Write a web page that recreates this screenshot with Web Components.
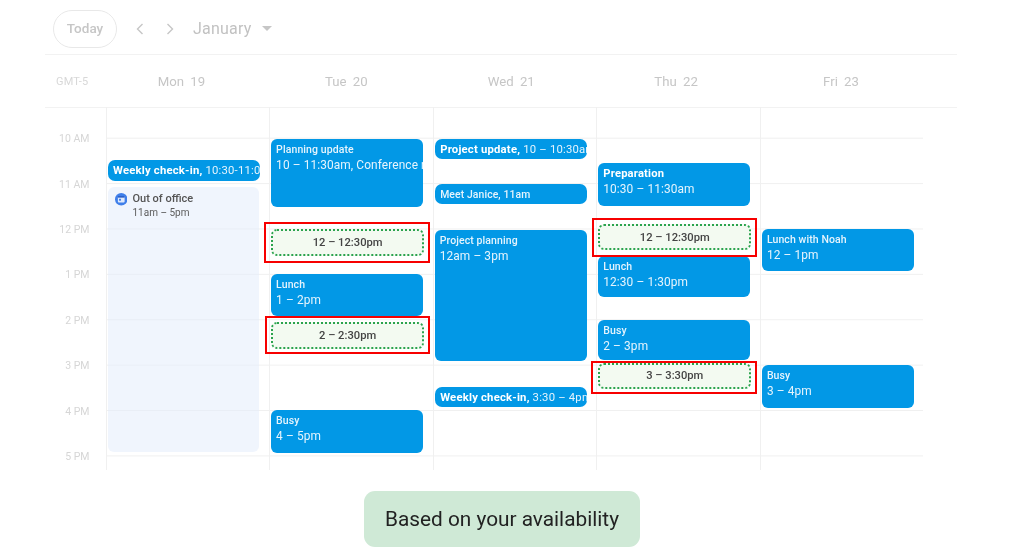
<!DOCTYPE html>
<html>
<head>
<meta charset="utf-8">
<title>Calendar</title>
<style>
  html, body { margin: 0; padding: 0; background: #fff; }
  body { font-family: Roboto, "Liberation Sans", sans-serif; width: 1010px; height: 558px; overflow: hidden; }
</style>
</head>
<body>
<cal-app>
  <cal-toolbar month="January"></cal-toolbar>
  <cal-weekdays></cal-weekdays>
  <cal-grid>
    <cal-day>
      <cal-event top="53" h="21" compact><b>Weekly check-in,</b> 10:30-11:00am</cal-event>
      <cal-away top="80" h="265"></cal-away>
    </cal-day>
    <cal-day>
      <cal-event top="32" h="68" title-text="Planning update">10 – 11:30am, Conference room</cal-event>
      <cal-suggest top="122" h="27" ring="-7 -6 -7 -7">12 – 12:30pm</cal-suggest>
      <cal-event top="167" h="42" title-text="Lunch">1 – 2pm</cal-event>
      <cal-suggest top="215" h="27" ring="-6 -6 -4.5 -6">2 – 2:30pm</cal-suggest>
      <cal-event top="303" h="43" title-text="Busy">4 – 5pm</cal-event>
    </cal-day>
    <cal-day>
      <cal-event top="32" h="20" compact><b>Project update,</b> 10 – 10:30am</cal-event>
      <cal-event top="77" h="20" compact small>Meet Janice, 11am</cal-event>
      <cal-event top="123" h="131" title-text="Project planning">12am – 3pm</cal-event>
      <cal-event top="280" h="20" compact><b>Weekly check-in,</b> 3:30 – 4pm</cal-event>
    </cal-day>
    <cal-day>
      <cal-event top="56" h="43" title-text="Preparation" strong>10:30 – 11:30am</cal-event>
      <cal-event top="149" h="41" title-text="Lunch">12:30 – 1:30pm</cal-event>
      <cal-suggest top="117" h="26" ring="-6 -6 -7 -6">12 – 12:30pm</cal-suggest>
      <cal-event top="213" h="40" title-text="Busy">2 – 3pm</cal-event>
      <cal-suggest top="256" h="25.5" ring="-2.5 -6 -5.5 -7">3 – 3:30pm</cal-suggest>
    </cal-day>
    <cal-day>
      <cal-event top="122" h="42" title-text="Lunch with Noah">12 – 1pm</cal-event>
      <cal-event top="258" h="43" title-text="Busy">3 – 4pm</cal-event>
    </cal-day>
  </cal-grid>
  <cal-caption>Based on your availability</cal-caption>
</cal-app>

<script>
// page frame: stacks toolbar, weekday row, grid and caption
class CalApp extends HTMLElement {
  constructor() {
    super();
    this.attachShadow({mode: 'open'}).innerHTML = `<style>
      :host { display: flex; flex-direction: column; width: 1010px; height: 558px; filter: blur(.45px); }
    </style><slot></slot>`;
  }
}

class CalToolbar extends HTMLElement {
  constructor() {
    super();
    this.attachShadow({mode: 'open'}).innerHTML = `<style>
      :host { display: flex; align-items: center; height: 55px; margin: 0 53px 0 45px; padding: 3px 0 0 8px;
        box-sizing: border-box; border-bottom: 1px solid #f2f2f2; color: #c2c2c2; }
      .today { display: flex; align-items: center; justify-content: center; width: 64px; height: 38px;
        padding-bottom: 1px; box-sizing: border-box;
        border: 1px solid #e8e8e8; border-radius: 19px; font-size: 13.5px; font-weight: 500; color: #c6c6c6; }
      svg { display: block; flex: none; }
      .prev { margin-left: 18px; }
      .next { margin-left: 20px; }
      .month { margin-left: 18px; font-size: 16px; letter-spacing: .2px; }
      .caret { margin-left: 11px; }
    </style>
    <div class="today">Today</div>
    <svg class="prev" width="10" height="14" viewBox="0 0 10 14"><path d="M7.5 2 L2.5 7 L7.5 12" fill="none" stroke="#c6c6c6" stroke-width="1.4"/></svg>
    <svg class="next" width="10" height="14" viewBox="0 0 10 14"><path d="M2.5 2 L7.5 7 L2.5 12" fill="none" stroke="#c6c6c6" stroke-width="1.4"/></svg>
    <div class="month">${this.getAttribute('month')}</div>
    <svg class="caret" width="10" height="5" viewBox="0 0 10 5"><path d="M0 0 H10 L5 5 Z" fill="#c6c6c6"/></svg>`;
  }
}

class CalWeekdays extends HTMLElement {
  constructor() {
    super();
    const days = [['Mon', 19], ['Tue', 20], ['Wed', 21], ['Thu', 22], ['Fri', 23]];
    this.attachShadow({mode: 'open'}).innerHTML = `<style>
      :host { display: flex; align-items: center; height: 53px; margin: 0 53px 0 45px; box-sizing: border-box;
        border-bottom: 1px solid #f2f2f2; color: #c6c6c6; }
      .tz { width: 54px; box-sizing: border-box; padding-left: 11px; font-size: 11px; color: #d8d8d8; letter-spacing: .2px; white-space: nowrap; }
      .day { width: 164.9px; text-align: center; font-size: 13.2px; word-spacing: 3px; }
    </style>
    <div class="tz">GMT-5</div>
    ${days.map(d => `<div class="day">${d[0]} ${d[1]}</div>`).join('')}`;
  }
}

// hour gutter on the left plus the day columns
class CalGrid extends HTMLElement {
  constructor() {
    super();
    const hours = ['10 AM', '11 AM', '12 PM', '1 PM', '2 PM', '3 PM', '4 PM', '5 PM'];
    this.attachShadow({mode: 'open'}).innerHTML = `<style>
      :host { display: flex; height: 363px; margin-top: -1px; }
      .gutter { width: 105.5px; flex: none; box-sizing: border-box; padding: 9px 16px 0 0; }
      .gutter div { height: 45.4px; display: flex; align-items: center; justify-content: flex-end;
        font-size: 10.5px; color: #d6d6d6; }
      .days { display: flex; }
    </style>
    <div class="gutter">${hours.map(h => `<div>${h}</div>`).join('')}</div>
    <div class="days"><slot></slot></div>`;
  }
}

class CalDay extends HTMLElement {
  constructor() {
    super();
    this.attachShadow({mode: 'open'}).innerHTML = `<style>
      :host { display: block; position: relative; width: 163.6px; height: 363px; box-sizing: border-box;
        border-left: 1px solid #f0f0f0;
        background: linear-gradient(to bottom, #f0f0f0 1px, transparent 1px) 0 30.7px / 100% 45.4px repeat-y; }
    </style><slot></slot>`;
  }
}

class CalEvent extends HTMLElement {
  constructor() {
    super();
    const title = this.getAttribute('title-text');
    this.attachShadow({mode: 'open'}).innerHTML = `<style>
      :host { position: absolute; left: 1px; width: 152px; box-sizing: border-box; overflow: hidden;
        background: #0298e6; color: #e6f4fd; border-radius: 6px; padding: 3.5px 0 0 5px;
        font-size: 11.9px; line-height: 15px; white-space: nowrap; letter-spacing: .1px; }
      :host([compact]) { display: flex; align-items: center; padding: 0 0 0 5.5px; border-radius: 7px; font-size: 11.3px; letter-spacing: .2px; }
      :host([small]) { font-size: 10.4px; font-weight: 500; letter-spacing: .1px; }
      .t { font-size: 10.5px; line-height: 13px; margin-bottom: 2px; font-weight: 500; letter-spacing: .1px; }
      :host([strong]) { padding-top: 4px; }
      :host([strong]) .t { font-size: 11.2px; font-weight: 700; color: #fff; letter-spacing: .2px; }
      ::slotted(b) { font-weight: 700; color: #fff; white-space: pre; }
    </style>
    ${title ? `<div class="t">${title}</div>` : ''}<span style="white-space:pre"><slot></slot></span>`;
    this.style.top = this.getAttribute('top') + 'px';
    this.style.height = this.getAttribute('h') + 'px';
  }
}

// out of office block with the little calendar badge
class CalAway extends HTMLElement {
  constructor() {
    super();
    this.attachShadow({mode: 'open'}).innerHTML = `<style>
      :host { position: absolute; left: 1px; width: 151px; box-sizing: border-box; display: flex; gap: 5.5px;
        background: rgba(226, 236, 251, .52); border-radius: 6px; padding: 5px 0 0 7px; color: #5c5c5c; }
      svg { flex: none; margin-top: 1px; }
      .a { font-size: 11px; line-height: 14px; font-weight: 500; color: #555; }
      .b { font-size: 10px; line-height: 14px; }
    </style>
    <svg width="12.5" height="12.5" viewBox="0 0 13 13">
      <circle cx="6.5" cy="6.5" r="6.5" fill="#3f7fea"/>
      <rect x="3" y="3.2" width="7" height="6.6" rx="1" fill="#dfe9fb"/>
      <rect x="3" y="3.2" width="7" height="1.6" fill="#1e56c4"/>
      <rect x="4.2" y="6" width="2" height="2" fill="#3f7fea"/>
    </svg>
    <div><div class="a">Out of office</div><div class="b">11am – 5pm</div></div>`;
    this.style.top = this.getAttribute('top') + 'px';
    this.style.height = this.getAttribute('h') + 'px';
  }
}

// suggested slot: dotted green box with a red highlight ring around it
// ring = top right bottom left, measured from the dotted box's outer edge
class CalSuggest extends HTMLElement {
  constructor() {
    super();
    const [t, r, b, l] = this.getAttribute('ring').split(' ').map(Number);
    this.attachShadow({mode: 'open'}).innerHTML = `<style>
      :host { position: absolute; left: 1px; width: 153px; box-sizing: border-box; z-index: 2;
        display: flex; align-items: center; justify-content: center;
        background: #f3faf1; border: 2px dotted #2ba34e; border-radius: 6px;
        font-size: 11.2px; color: #444; font-weight: 500; }
      .ring { position: absolute; border: 2px solid #f70000; box-sizing: border-box;
        top: ${t - 2}px; bottom: ${b - 2}px; left: ${l - 2}px; right: ${r - 2}px; }
    </style><div class="ring"></div><slot></slot>`;
    this.style.top = this.getAttribute('top') + 'px';
    this.style.height = this.getAttribute('h') + 'px';
  }
}

class CalCaption extends HTMLElement {
  constructor() {
    super();
    this.attachShadow({mode: 'open'}).innerHTML = `<style>
      :host { display: flex; align-items: center; justify-content: center; align-self: flex-start;
        width: 276px; height: 56px; margin: 21px 0 0 364px; background: #cfe9d6; border-radius: 11px;
        color: #222; font-size: 20.8px; }
    </style><slot></slot>`;
  }
}

customElements.define('cal-app', CalApp);
customElements.define('cal-toolbar', CalToolbar);
customElements.define('cal-weekdays', CalWeekdays);
customElements.define('cal-grid', CalGrid);
customElements.define('cal-day', CalDay);
customElements.define('cal-event', CalEvent);
customElements.define('cal-away', CalAway);
customElements.define('cal-suggest', CalSuggest);
customElements.define('cal-caption', CalCaption);
</script>
</body>
</html>
